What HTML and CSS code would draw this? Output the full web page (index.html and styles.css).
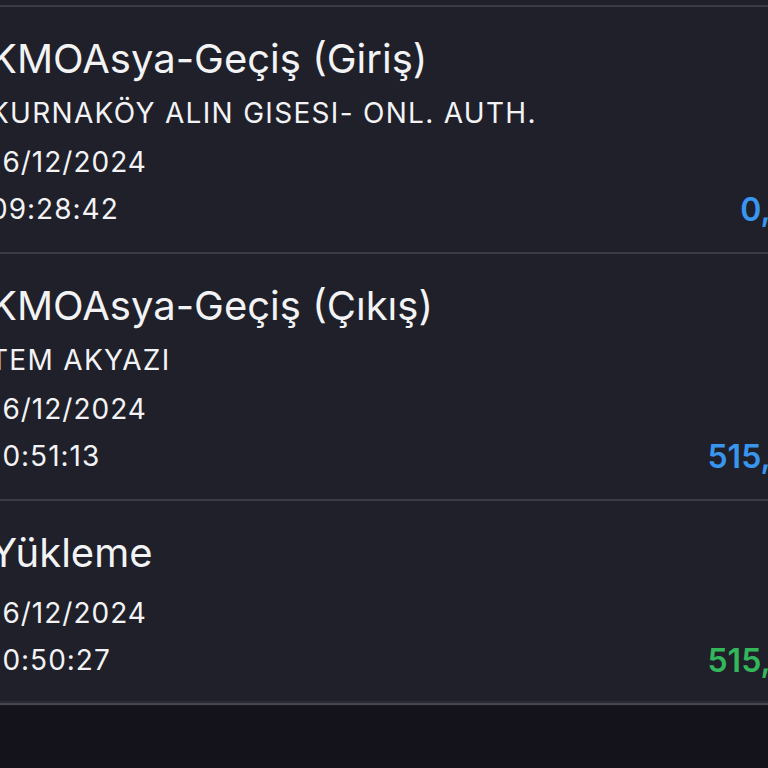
FILE: index.html
```html
<!DOCTYPE html>
<html lang="tr">
<head>
<meta charset="utf-8">
<title>Hareketler</title>
<link rel="stylesheet" href="styles.css">
</head>
<body>
<main class="screen">
  <ul class="list">
    <li class="item">
      <div class="info">
        <div class="title">KMOAsya-Geçiş (Giriş)</div>
        <div class="sub">KURNAKÖY ALIN GISESI- ONL. AUTH.</div>
        <div class="line">16/12/2024</div>
        <div class="line line--last">09:28:42</div>
      </div>
      <div class="amount amount--blue">0,00</div>
    </li>
    <li class="item">
      <div class="info">
        <div class="title">KMOAsya-Geçiş (Çıkış)</div>
        <div class="sub">TEM AKYAZI</div>
        <div class="line">16/12/2024</div>
        <div class="line line--last">10:51:13</div>
      </div>
      <div class="amount amount--blue">515,00</div>
    </li>
    <li class="item item--nosub">
      <div class="info">
        <div class="title">Yükleme</div>
        <div class="line">16/12/2024</div>
        <div class="line line--last">10:50:27</div>
      </div>
      <div class="amount amount--green">515,00</div>
    </li>
  </ul>
</main>
</body>
</html>
```

FILE: styles.css
```css
html, body {
  margin: 0;
  padding: 0;
}
body {
  background: #14131b;
  color: #f3f3f5;
  font-family: Inter, "Noto Sans", sans-serif;
  overflow: hidden;
  width: 768px;
  height: 768px;
}
.screen {
  background: #14131b;
  height: 768px;
}
.list {
  list-style: none;
  margin: 0;
  padding: 5px 0 0;
  background: #1f202a;
  border-bottom: 2px solid #45464e;
  box-shadow: 0 1px 0 #1a1a22, inset 0 -2px 0 #2a2b34;
}
.item {
  display: flex;
  justify-content: space-between;
  align-items: flex-end;
  border-top: 2px solid #3a3b45;
  margin-left: -10px;
  width: 822px;
  padding: 28px 0 20px;
  box-sizing: border-box;
}
.info {
  display: flex;
  flex-direction: column;
}
.title {
  font-size: 40px;
  line-height: 48px;
  font-weight: 400;
  margin-bottom: 6px;
}
.sub {
  font-size: 28px;
  line-height: 49px;
  font-weight: 400;
  letter-spacing: 1.3px;
}
.line {
  font-size: 28px;
  line-height: 48px;
  letter-spacing: 1px;
}
.line--last {
  line-height: 46px;
}
.item--nosub .title {
  margin-bottom: 12px;
}
.amount {
  font-size: 32px;
  line-height: 44px;
  font-weight: 600;
  white-space: nowrap;
}
.amount--blue {
  color: #3896ee;
}
.amount--green {
  color: #34b75a;
}
```
